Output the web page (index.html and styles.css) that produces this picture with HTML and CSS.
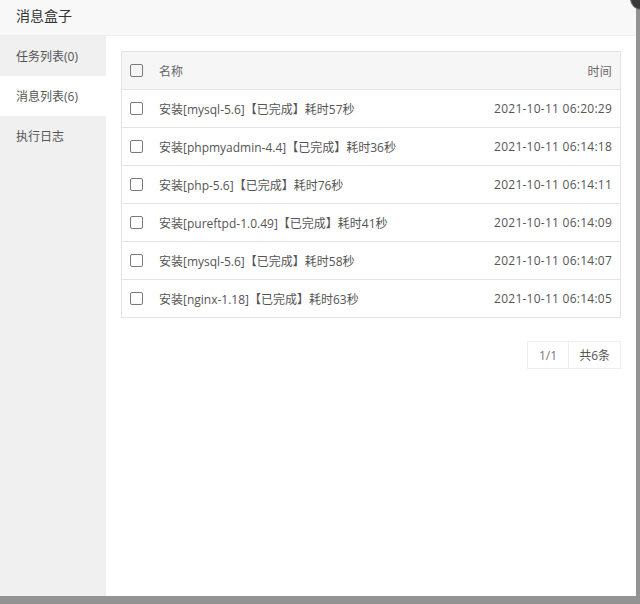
FILE: index.html
```html
<!DOCTYPE html>
<html lang="zh-CN">
<head>
    <meta charset="UTF-8">
    <title>消息盒子</title>
    <link rel="stylesheet" href="styles.css">
</head>
<body>
    <div class="layer">
        <div class="layer-title">消息盒子</div>
        <span class="layer-close"></span>
        <div class="layer-body">
            <div class="tabs">
                <div class="tab">任务列表(0)</div>
                <div class="tab active">消息列表(6)</div>
                <div class="tab">执行日志</div>
            </div>
            <div class="content">
                <table class="msg-table">
                    <thead>
                        <tr>
                            <th class="check"><span class="checkbox"></span></th>
                            <th>名称</th>
                            <th class="time">时间</th>
                        </tr>
                    </thead>
                    <tbody>
                        <tr>
                            <td class="check"><span class="checkbox"></span></td>
                            <td>安装[mysql-5.6]【已完成】耗时57秒</td>
                            <td class="time">2021-10-11 06:20:29</td>
                        </tr>
                        <tr>
                            <td class="check"><span class="checkbox"></span></td>
                            <td>安装[phpmyadmin-4.4]【已完成】耗时36秒</td>
                            <td class="time">2021-10-11 06:14:18</td>
                        </tr>
                        <tr>
                            <td class="check"><span class="checkbox"></span></td>
                            <td>安装[php-5.6]【已完成】耗时76秒</td>
                            <td class="time">2021-10-11 06:14:11</td>
                        </tr>
                        <tr>
                            <td class="check"><span class="checkbox"></span></td>
                            <td>安装[pureftpd-1.0.49]【已完成】耗时41秒</td>
                            <td class="time">2021-10-11 06:14:09</td>
                        </tr>
                        <tr>
                            <td class="check"><span class="checkbox"></span></td>
                            <td>安装[mysql-5.6]【已完成】耗时58秒</td>
                            <td class="time">2021-10-11 06:14:07</td>
                        </tr>
                        <tr>
                            <td class="check"><span class="checkbox"></span></td>
                            <td>安装[nginx-1.18]【已完成】耗时63秒</td>
                            <td class="time">2021-10-11 06:14:05</td>
                        </tr>
                    </tbody>
                </table>
                <div class="pager">
                    <span class="pager-item muted">1/1</span>
                    <span class="pager-item">共6条</span>
                </div>
            </div>
        </div>
    </div>
</body>
</html>
```

FILE: styles.css
```css
body {
    margin: 0;
    background-color: #939393;
    font-family: 'Open Sans', 'Noto Sans CJK SC', sans-serif;
    font-size: 12px;
    color: #555;
}

.layer {
    position: relative;
    width: 636px;
    height: 596px;
    background-color: #fff;
    display: flex;
    flex-direction: column;
}

.layer-title {
    height: 36px;
    line-height: 32px;
    padding-left: 16px;
    font-size: 14px;
    color: #333;
    background-color: #f8f8f8;
    border-bottom: 1px solid #eee;
    box-sizing: border-box;
}

.layer-close {
    position: absolute;
    top: -12px;
    right: -16px;
    width: 20px;
    height: 20px;
    border-radius: 50%;
    background-color: #3a3a3a;
    border: 1px solid #777;
}

.layer-body {
    flex: 1;
    display: flex;
}

.tabs {
    width: 106px;
    background-color: #f0f0f0;
}

.tab {
    height: 40px;
    line-height: 42px;
    padding-left: 16px;
    font-size: 12px;
    color: #555;
}

.tab.active {
    background-color: #fff;
}

.content {
    flex: 1;
    padding: 15px 15px 0 15px;
}

.msg-table {
    width: 100%;
    border-collapse: collapse;
    border: 1px solid #e4e4e4;
}

.msg-table th,
.msg-table td {
    height: 37px;
    padding: 0 8px 0 0;
    text-align: left;
    font-weight: normal;
    border-bottom: 1px solid #e4e4e4;
    color: #555;
    white-space: nowrap;
}

.msg-table th {
    background-color: #f6f6f6;
    color: #666;
}

.msg-table .check {
    width: 29px;
    padding: 0 0 0 8px;
}

.msg-table .time {
    text-align: right;
    letter-spacing: 0.25px;
}

.checkbox {
    display: inline-block;
    width: 11px;
    height: 11px;
    border: 1px solid #7a7a7a;
    border-radius: 2px;
    vertical-align: middle;
    margin-top: -2px;
}

.pager {
    display: flex;
    justify-content: flex-end;
    margin-top: 23px;
}

.pager-item {
    height: 26px;
    line-height: 27px;
    padding: 0 10px;
    border: 1px solid #eee;
    color: #555;
}

.pager-item.muted {
    padding: 0 11px;
    color: #777;
}

.pager-item + .pager-item {
    border-left: none;
}
```
